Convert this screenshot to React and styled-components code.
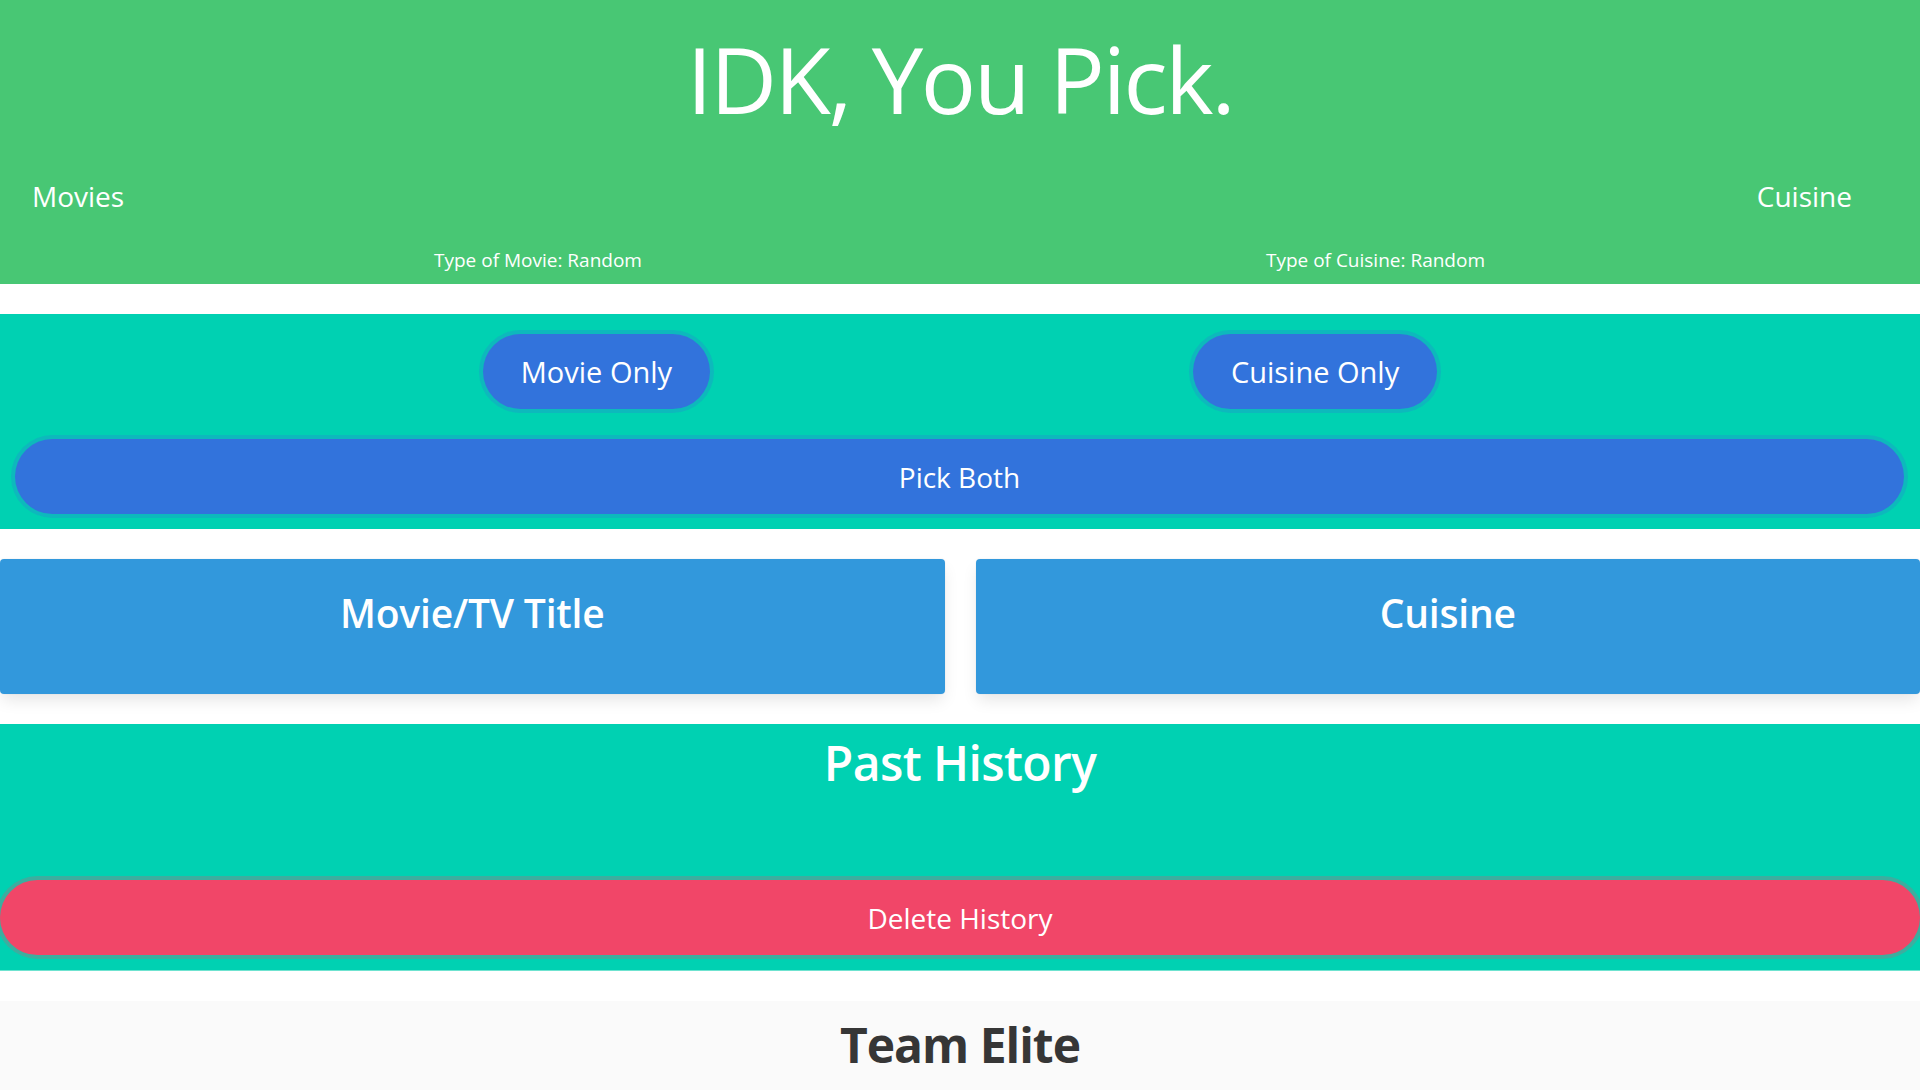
import React from 'react'
import styled, { createGlobalStyle } from 'styled-components'

const GlobalStyle = createGlobalStyle`
  html, body {
    margin: 0;
    padding: 0;
    background: #fff;
  }
  body {
    font-family: "Open Sans", "Noto Sans", sans-serif;
    color: #4a4a4a;
  }
  * {
    box-sizing: border-box;
  }
`

const colors = {
  success: '#48c774',
  primary: '#00d1b2',
  link: '#3273dc',
  info: '#3298dc',
  danger: '#f14668',
  light: '#fafafa',
  dark: '#363636',
}

const Page = styled.div`
  display: flex;
  flex-direction: column;
  gap: 30px;
`

const Hero = styled.header`
  background: ${colors.success};
  color: #fff;
  padding: 33px 0 14px;
`

const Title = styled.h1`
  margin: 0;
  text-align: center;
  font-size: 92px;
  line-height: 1;
  font-weight: 400;
  letter-spacing: -2.3px;
`

const NavRow = styled.nav`
  display: flex;
  justify-content: space-between;
  padding: 0 68px 0 32px;
  margin-top: 57px;
  font-size: 28px;
  line-height: 1;
`

const TypeRow = styled.div`
  display: flex;
  justify-content: space-between;
  padding: 0 435px 0 434px;
  margin-top: 41px;
  font-size: 19px;
  line-height: 1;
`

const PickSection = styled.section`
  background: ${colors.primary};
  padding: 20px 16px 15px 15px;
  display: flex;
  flex-direction: column;
  gap: 30px;
`

const ButtonRow = styled.div`
  display: flex;
  justify-content: space-evenly;
  margin: 0 -16px 0 -15px;
`

const PillButton = styled.button`
  display: flex;
  align-items: center;
  justify-content: center;
  height: 75px;
  width: ${p => (p.$wide ? '100%' : 'auto')};
  padding: 0 38px;
  border: none;
  border-radius: 9999px;
  background: ${p => p.$color};
  color: #fff;
  font-family: inherit;
  font-size: ${p => (p.$wide ? '28px' : '29px')};
  cursor: pointer;
  box-shadow: 0 0 0 4px ${p => p.$ring};
`

const CardGrid = styled.div`
  display: grid;
  grid-template-columns: 1fr 1fr;
  gap: 31px;
`

const Card = styled.div`
  height: 135px;
  background: ${colors.info};
  border-radius: 4px;
  box-shadow: 0 8px 16px -2px rgba(10, 10, 10, 0.1), 0 0 0 1px rgba(10, 10, 10, 0.02);
  color: #fff;
  padding-top: 34px;
`

const CardTitle = styled.h2`
  margin: 0;
  text-align: center;
  font-size: 39px;
  line-height: 1;
  font-weight: 600;
  letter-spacing: -0.2px;
`

const HistorySection = styled.section`
  background: ${colors.primary};
  padding: 15px 0 15px;
  display: flex;
  flex-direction: column;
  gap: 93px;
  border-bottom: 1px solid #6fe3d0;
`

const HistoryTitle = styled.h2`
  margin: 0;
  text-align: center;
  color: #fff;
  font-size: 48px;
  line-height: 1;
  font-weight: 600;
  letter-spacing: -0.6px;
`

const Footer = styled.footer`
  background: ${colors.light};
  padding: 20px 0 40px;
`

const FooterTitle = styled.h2`
  margin: 0;
  text-align: center;
  color: ${colors.dark};
  font-size: 48px;
  line-height: 1;
  font-weight: 700;
  letter-spacing: -1px;
`

export default function App() {
  return (
    <>
      <GlobalStyle />
      <Page>
        <Hero>
          <Title>IDK, You Pick.</Title>
          <NavRow>
            <span>Movies</span>
            <span>Cuisine</span>
          </NavRow>
          <TypeRow>
            <span>Type of Movie: Random</span>
            <span>Type of Cuisine: Random</span>
          </TypeRow>
        </Hero>

        <PickSection>
          <ButtonRow>
            <PillButton $color={colors.link} $ring="rgba(50, 115, 220, 0.25)">Movie Only</PillButton>
            <PillButton $color={colors.link} $ring="rgba(50, 115, 220, 0.25)">Cuisine Only</PillButton>
          </ButtonRow>
          <PillButton $wide $color={colors.link} $ring="rgba(50, 115, 220, 0.25)">Pick Both</PillButton>
        </PickSection>

        <CardGrid>
          <Card>
            <CardTitle>Movie/TV Title</CardTitle>
          </Card>
          <Card>
            <CardTitle>Cuisine</CardTitle>
          </Card>
        </CardGrid>

        <HistorySection>
          <HistoryTitle>Past History</HistoryTitle>
          <PillButton $wide $color={colors.danger} $ring="rgba(241, 70, 104, 0.25)">Delete History</PillButton>
        </HistorySection>

        <Footer>
          <FooterTitle>Team Elite</FooterTitle>
        </Footer>
      </Page>
    </>
  )
}
